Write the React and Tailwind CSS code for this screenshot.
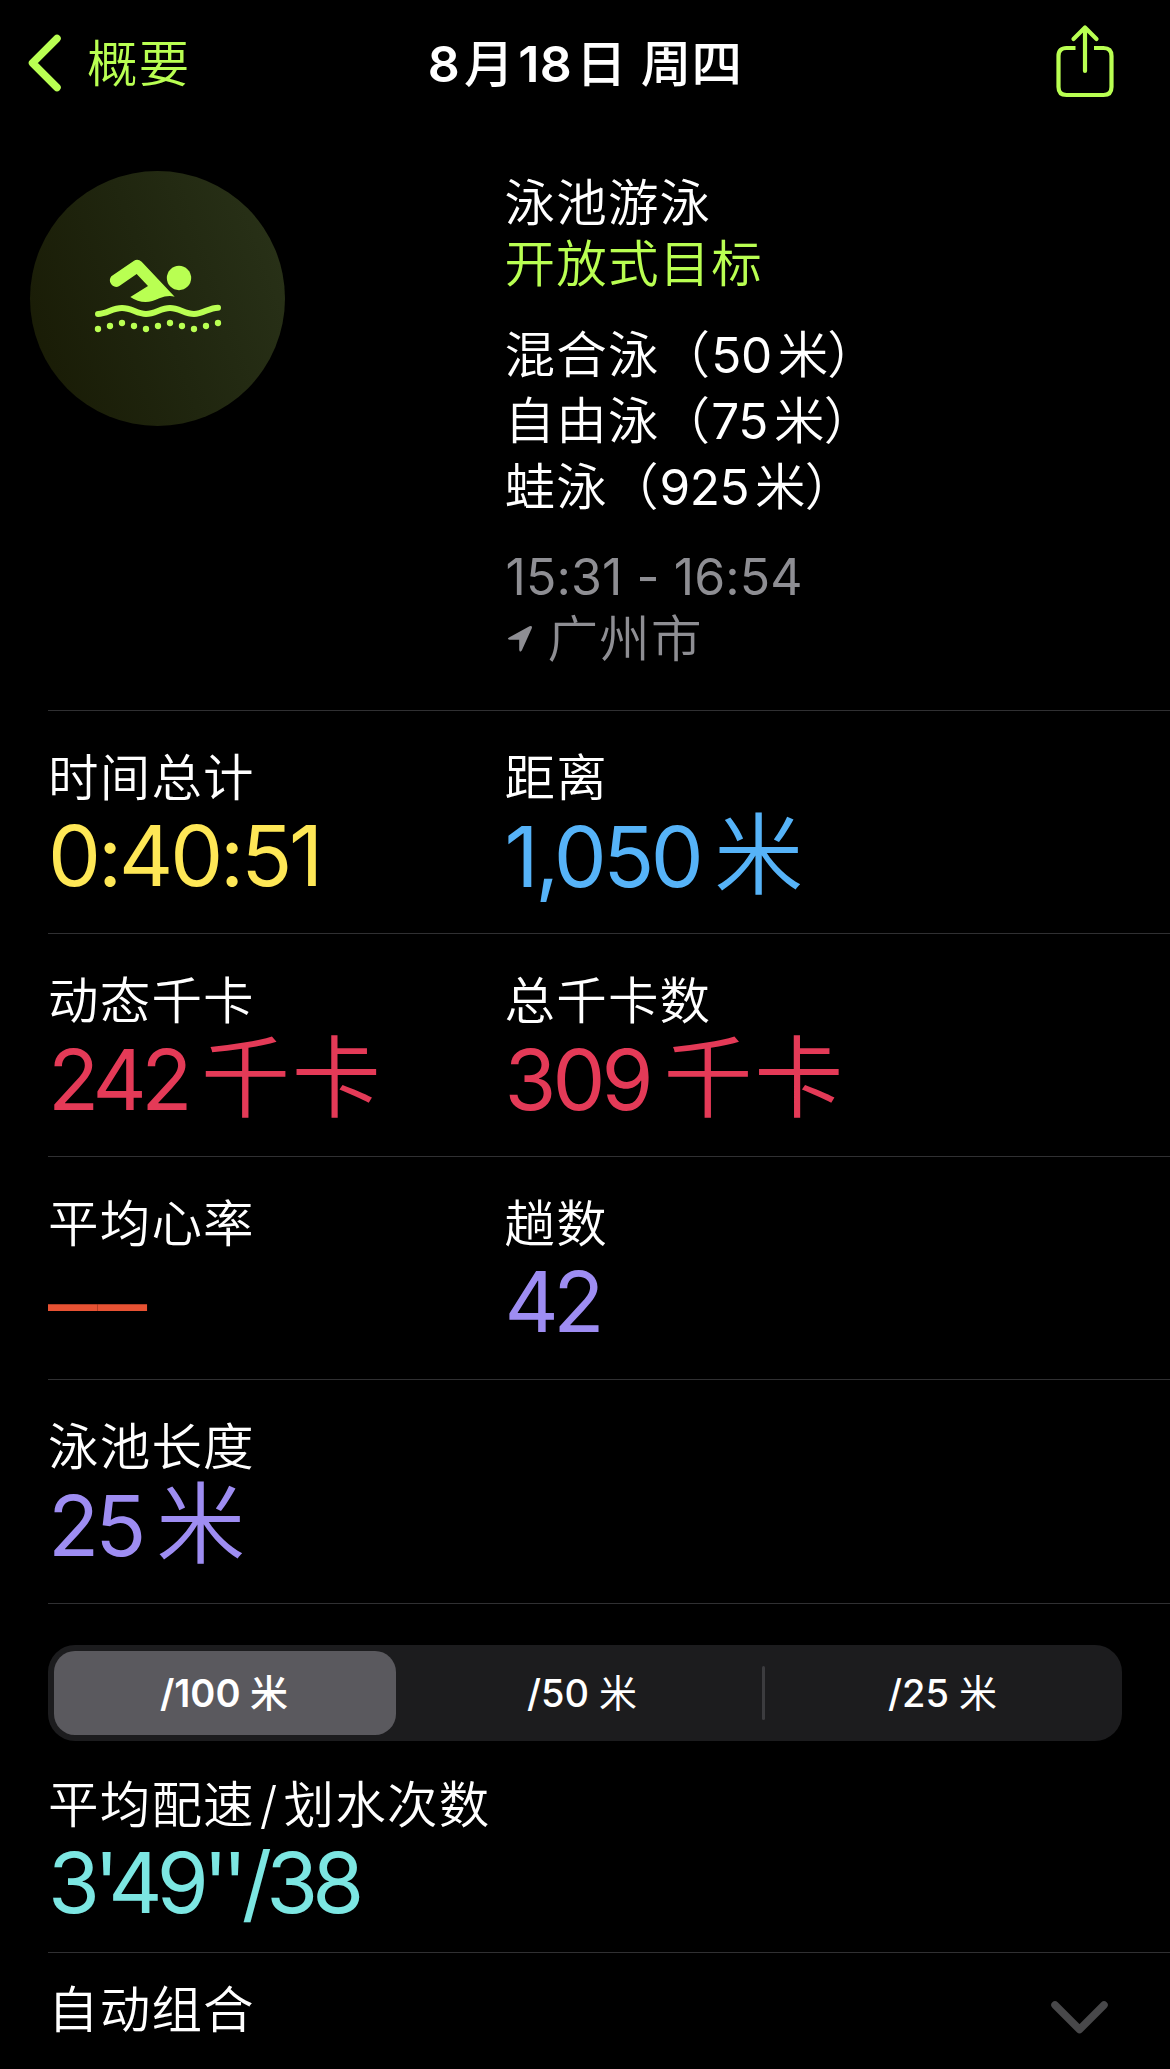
import React from 'react';

const FONT = "font-['Inter','Noto_Sans_CJK_SC',sans-serif]";

const BackIcon = () => (
  <svg width="34" height="58" viewBox="0 0 34 58" fill="none">
    <path
      d="M29 4.500L4.500 29L29 53.500"
      stroke="#b9ff52"
      strokeWidth="7.500"
      strokeLinecap="round"
      strokeLinejoin="round"
    />
  </svg>
);

const ShareIcon = () => (
  <svg
    width="58"
    height="74"
    viewBox="0 0 58 74"
    fill="none"
    stroke="#b9ff52"
    strokeWidth="4.200"
    strokeLinejoin="round"
  >
    <path d="M19.500 24H10.500Q2.500 24 2.500 32V63Q2.500 71 10.500 71H47.500Q55.500 71 55.500 63V32Q55.500 24 47.500 24H38" />
    <path d="M29 47V4M17.500 15L29 3.500L40.500 15" strokeLinecap="round" />
  </svg>
);

const ripples = [
  [234, 507], [270, 498], [306, 489], [342, 498], [378, 507], [414, 498],
  [450, 489], [486, 498], [522, 507], [558, 498], [594, 489]
];

const SwimIcon = () => (
  <svg width="255" height="255" viewBox="30 33 765 765" fill="#b9ff52">
    <circle cx="477" cy="354" r="36.500" />
    <path d="M341 303Q353 295 365 305L464 410Q444 404 418 415Q372 439 331 411L384 378L350 342L298 378C279 389 261 364 274 349Z" />
    <path
      d="M234 462C262 462 276 444 306 444S350 462 378 462S422 444 450 444S494 462 522 462S566 443 594 443"
      fill="none"
      stroke="#b9ff52"
      strokeWidth="18"
      strokeLinecap="round"
    />
    {ripples.map(([x, y]) => (
      <circle key={x} cx={x} cy={y} r="9.500" />
    ))}
  </svg>
);

const LocationIcon = () => (
  <svg width="26" height="28" viewBox="0 0 26 28" fill="#8e8e93">
    <path d="M2 12.500L22.500 1.200Q25.600 0.200 24.800 3.200L14.800 25.600Q12.500 28 12.200 24.800V14.800L2.500 14.700Q-0.500 14.200 2 12.500Z" />
  </svg>
);

const ChevronDownIcon = () => (
  <svg width="58" height="36" viewBox="0 0 58 36" fill="none">
    <path
      d="M5 5L29.500 29.500L54 5"
      stroke="#48484a"
      strokeWidth="7.500"
      strokeLinecap="round"
      strokeLinejoin="round"
    />
  </svg>
);

const Label = ({ children, color = 'text-white' }) => (
  <div className={`text-[50.5px] leading-[61px] font-[350] tracking-[1.2px] whitespace-nowrap ${color}`}>
    {children}
  </div>
);

// Digits are set slightly smaller than the unit next to them
const Value = ({ value, unit, color, size = 'text-[84px] tracking-[-4px]' }) => (
  <div className={`font-normal whitespace-nowrap ${unit ? 'leading-[93px]' : 'leading-24'} ${color}`}>
    <span className={size}>{value}</span>
    {unit && <span className="ml-3.5 text-[89px] font-[350] tracking-[1.8px]">{unit}</span>}
  </div>
);

const stats = [
  [
    { label: '时间总计', value: '0:40:51', color: 'text-[#fee756]', size: 'text-[84px] tracking-[-3.1px]' },
    { label: '距离', value: '1,050', unit: '米', color: 'text-[#56b3f8]', size: 'text-[84px] tracking-[-3.5px]' }
  ],
  [
    { label: '动态千卡', value: '242', unit: '千卡', color: 'text-[#e43a57]', size: 'text-[84px] tracking-[-5.5px]' },
    { label: '总千卡数', value: '309', unit: '千卡', color: 'text-[#e43a57]' }
  ],
  [
    {
      label: '平均心率',
      value: '––',
      color: 'text-[#e75233]',
      size: 'inline-block origin-left translate-y-0.5 scale-x-[1.18] text-[84px]'
    },
    { label: '趟数', value: '42', color: 'text-[#9e8df2]', size: 'text-[84px] tracking-[-5.5px]' }
  ],
  [{ label: '泳池长度', value: '25', unit: '米', color: 'text-[#9e8df2]' }]
];

const StatRow = ({ items }) => (
  <div className="ml-12 grid h-[223px] grid-cols-[456.5px_1fr] border-t border-[#303032] pt-9">
    {items.map((item) => (
      <div key={item.label}>
        <Label>{item.label}</Label>
        <Value {...item} />
      </div>
    ))}
  </div>
);

const strokes = [
  { name: '混合泳', distance: '50' },
  { name: '自由泳', distance: '75' },
  { name: '蛙泳', distance: '925' }
];

export default function App() {
  return (
    <div className={`h-[2069px] w-[1170px] overflow-hidden bg-black text-white ${FONT}`}>
      {/* Navigation bar */}
      <header className="grid h-[126px] grid-cols-[1fr_auto_1fr] items-center pl-7 pr-14">
        <div className="flex items-center">
          <BackIcon />
          <div className="ml-[25px] pt-px">
            <Label color="text-[#b9ff52]">概要</Label>
          </div>
        </div>
        <h1 className="pt-px pl-7 text-[50px] leading-[61px] font-semibold tracking-[0.3px] whitespace-nowrap">
          8<span className="ml-1 text-[50px] font-medium">月</span>
          <span className="ml-1">18</span>
          <span className="ml-1 text-[50.5px] font-medium">日 周四</span>
        </h1>
        <div className="flex justify-end pb-1">
          <ShareIcon />
        </div>
      </header>

      {/* Workout summary */}
      <section className="grid h-[584px] grid-cols-[474.5px_1fr] pl-[30px] pt-[45px]">
        <div className="size-[255px] rounded-full bg-linear-[70deg,#181a04,#20260f_50%,#2a3319]">
          <SwimIcon />
        </div>
        <div className="pt-px">
          <Label>泳池游泳</Label>
          <Label color="text-[#b9ff52]">开放式目标</Label>
          <ul className="mt-7">
            {strokes.map((stroke) => (
              <li key={stroke.name} className="text-[50.5px] leading-[66px] font-[350] tracking-[1.2px]">
                {stroke.name}（
                <span className="text-[49.5px] font-normal tracking-[-0.5px]">{stroke.distance}</span>
                <span className="ml-1.5">米</span>
                <span className="-ml-0.5">）</span>
              </li>
            ))}
          </ul>
          <div className="mt-[27px] pl-px text-[50px] leading-[61px] tracking-[0.1px] text-[#8e8e93]">
            15:31 - 16:54
          </div>
          <div className="flex items-center gap-[15px] pl-0.5">
            <LocationIcon />
            <Label color="text-[#8e8e93]">广州市</Label>
          </div>
        </div>
      </section>

      {/* Totals */}
      <section>
        {stats.map((items) => (
          <StatRow key={items[0].label} items={items} />
        ))}
      </section>

      {/* Pace */}
      <section className="mt-px ml-12 h-[349px] border-t border-[#303032] pt-[41px]">
        <div className="flex h-24 w-[1074px] items-center rounded-[27px] bg-[#1c1c1e] p-1.5 text-[38px]">
          <div className="flex h-[84px] w-[342px] items-center justify-center rounded-[21px] bg-[#5a595e] pt-px pr-0.5 font-semibold">
            <span>
              /100 <span className="font-medium">米</span>
            </span>
          </div>
          <div className="flex-1 pt-px pl-1.5 text-center font-medium">
            /50 <span className="font-normal">米</span>
          </div>
          <div className="h-[54px] w-[3px] rounded-full bg-[#3c3c3f]" />
          <div className="w-[351px] pt-px pl-1 text-center font-medium">
            /25 <span className="font-normal">米</span>
          </div>
        </div>
        <div className="pt-[33px]">
          <Label>
            平均配速<span className="mx-[5px]">/</span>划水次数
          </Label>
          <Value value="3'49''/38" color="text-[#7ce6e2]" size="text-[84px] tracking-[-5.8px]" />
        </div>
      </section>

      <section className="ml-12 flex items-start justify-between border-t border-[#303032] pt-[26px] pr-[62px]">
        <Label>自动组合</Label>
        <div className="pt-[21px]">
          <ChevronDownIcon />
        </div>
      </section>
    </div>
  );
}
